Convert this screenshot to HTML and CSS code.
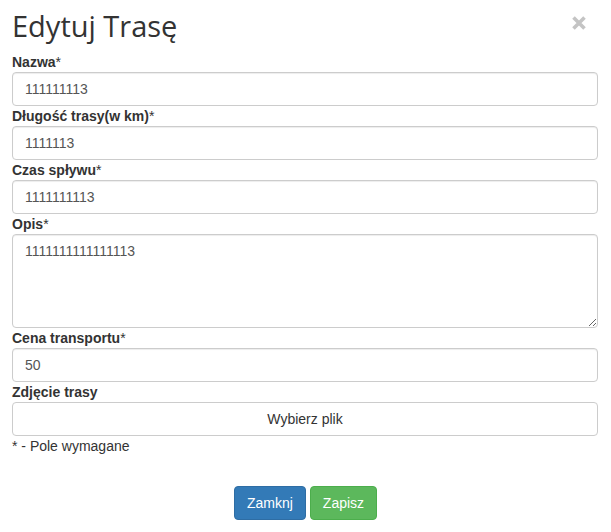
FILE: index.html
```html
<!DOCTYPE html>
<html lang="pl">
<head>
<meta charset="utf-8">
<title>Edytuj Trasę</title>
<link rel="stylesheet" href="styles.css">
</head>
<body>
<div class="modal">
  <div class="modal-header">
    <h4 class="modal-title">Edytuj Trasę</h4>
    <button class="close" type="button" aria-label="Zamknij">
      <svg width="16" height="16" viewBox="0 0 16 16"><path d="M2.5 2.5 L13.5 13.5 M13.5 2.5 L2.5 13.5" stroke="#c4c4c4" stroke-width="3.6" fill="none"/></svg>
    </button>
  </div>
  <form class="modal-body">
    <label class="label">Nazwa<span class="req">*</span></label>
    <input class="control" type="text" value="111111113">
    <label class="label">Długość trasy(w km)<span class="req">*</span></label>
    <input class="control" type="text" value="1111113">
    <label class="label">Czas spływu<span class="req">*</span></label>
    <input class="control" type="text" value="1111111113">
    <label class="label">Opis<span class="req">*</span></label>
    <textarea class="control area" rows="4">1111111111111113</textarea>
    <label class="label">Cena transportu<span class="req">*</span></label>
    <input class="control" type="text" value="50">
    <label class="label">Zdjęcie trasy</label>
    <div class="file">Wybierz plik</div>
    <p class="note">* - Pole wymagane</p>
  </form>
  <div class="modal-footer">
    <button class="btn btn-primary" type="button">Zamknj</button>
    <button class="btn btn-success" type="button">Zapisz</button>
  </div>
</div>
</body>
</html>
```

FILE: styles.css
```css
html, body {
  margin: 0;
  padding: 0;
  background: #fff;
  overflow: hidden;
}
body {
  font-family: "Liberation Sans", Arial, sans-serif;
  font-size: 14px;
  line-height: 20px;
  color: #333;
}
.modal {
  width: 611px;
  height: 532px;
  box-sizing: border-box;
}
.modal-header {
  position: relative;
  padding: 10px 13px 10px 12px;
}
.modal-title {
  margin: 0;
  font-family: "Open Sans", "Noto Sans", sans-serif;
  font-weight: 400;
  font-size: 29px;
  line-height: 32px;
  color: #333;
}
.close {
  position: absolute;
  top: 15px;
  left: 571px;
  width: 16px;
  height: 16px;
  padding: 0;
  border: 0;
  background: transparent;
  display: block;
}
.close svg { display: block; }
.modal-body {
  display: flex;
  flex-direction: column;
  margin: 0;
  padding: 0 13px 15px 12px;
}
.label {
  display: block;
  font-weight: 700;
  line-height: 20px;
  height: 20px;
}
.req {
  font-weight: 400;
}
.control {
  display: block;
  box-sizing: border-box;
  width: 100%;
  height: 34px;
  margin: 0;
  padding: 6px 12px;
  font-family: "Liberation Sans", Arial, sans-serif;
  font-size: 14px;
  line-height: 20px;
  color: #555;
  background: #fff;
  border: 1px solid #ccc;
  border-radius: 4px;
  box-shadow: inset 0 1px 1px rgba(0, 0, 0, .075);
  outline: none;
}
.area {
  height: 94px;
  resize: vertical;
}
.file {
  box-sizing: border-box;
  height: 34px;
  padding: 6px 12px;
  border: 1px solid #ccc;
  border-radius: 4px;
  text-align: center;
  color: #333;
  background: #fff;
}
.note {
  margin: 0;
  line-height: 20px;
}
.modal-footer {
  display: flex;
  justify-content: center;
  gap: 4px;
  padding: 15px 15px 12px;
}
.btn {
  box-sizing: border-box;
  height: 34px;
  padding: 6px 12px;
  font-family: "Liberation Sans", Arial, sans-serif;
  font-size: 14px;
  line-height: 20px;
  color: #fff;
  border: 1px solid transparent;
  border-radius: 4px;
}
.btn-primary {
  background: #337ab7;
  border-color: #2e6da4;
}
.btn-success {
  background: #5cb85c;
  border-color: #4cae4c;
}
```
